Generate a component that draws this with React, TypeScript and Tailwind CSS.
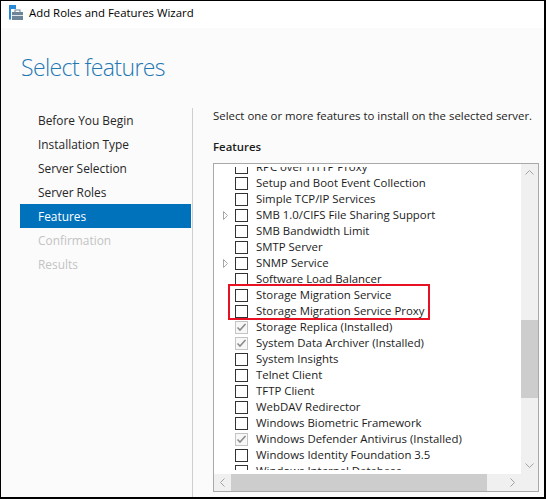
import React from 'react';

type Feature = {
    name: string;
    expandable?: boolean;
    installed?: boolean;
};

const features: Feature[] = [
    { name: 'RPC over HTTP Proxy' },
    { name: 'Setup and Boot Event Collection' },
    { name: 'Simple TCP/IP Services' },
    { name: 'SMB 1.0/CIFS File Sharing Support', expandable: true },
    { name: 'SMB Bandwidth Limit' },
    { name: 'SMTP Server' },
    { name: 'SNMP Service', expandable: true },
    { name: 'Software Load Balancer' },
    { name: 'Storage Migration Service' },
    { name: 'Storage Migration Service Proxy' },
    { name: 'Storage Replica (Installed)', installed: true },
    { name: 'System Data Archiver (Installed)', installed: true },
    { name: 'System Insights' },
    { name: 'Telnet Client' },
    { name: 'TFTP Client' },
    { name: 'WebDAV Redirector' },
    { name: 'Windows Biometric Framework' },
    { name: 'Windows Defender Antivirus (Installed)', installed: true },
    { name: 'Windows Identity Foundation 3.5' },
    { name: 'Windows Internal Database' },
];

const steps = [
    { label: 'Before You Begin', state: 'done' },
    { label: 'Installation Type', state: 'done' },
    { label: 'Server Selection', state: 'done' },
    { label: 'Server Roles', state: 'done' },
    { label: 'Features', state: 'active' },
    { label: 'Confirmation', state: 'disabled' },
    { label: 'Results', state: 'disabled' },
];

const font = "font-['Open_Sans',sans-serif]";

function WizardIcon() {
    return (
        <svg width="16" height="16" viewBox="0 0 16 16">
            <rect x="0" y="0" width="7" height="4" fill="#2b8ad6" />
            <rect x="0" y="0" width="2" height="14.5" fill="#2b8ad6" />
            <rect x="6" y="5" width="5" height="3" fill="none" stroke="#6e8598" strokeWidth="1" />
            <rect x="3" y="7" width="11" height="8" fill="#6e8598" />
            <rect x="3" y="10" width="11" height="1" fill="#dfe6ec" />
        </svg>
    );
}

function Chevron({ dir }: { dir: 'up' | 'down' | 'left' | 'right' }) {
    const paths = {
        up: 'M0.5 4.5 L4.5 0.5 L8.5 4.5',
        down: 'M0.5 0.5 L4.5 4.5 L8.5 0.5',
        left: 'M4.5 0.5 L0.5 4.5 L4.5 8.5',
        right: 'M0.5 0.5 L4.5 4.5 L0.5 8.5',
    };
    const vertical = dir === 'up' || dir === 'down';
    return (
        <svg width={vertical ? 9 : 5} height={vertical ? 5 : 9} viewBox={vertical ? '0 0 9 5' : '0 0 5 9'}>
            <path d={paths[dir]} fill="none" stroke="#a3a3a3" strokeWidth="1" />
        </svg>
    );
}

function Checkbox({ checked }: { checked?: boolean }) {
    if (checked) {
        return (
            <div className="w-[13px] h-[13px] border border-[#c4c4c4] bg-[#f7f7f7] flex items-center justify-center">
                <svg width="11" height="11" viewBox="0 0 11 11">
                    <path d="M1.5 5.5 L4 8 L9.5 2" fill="none" stroke="#8c8c8c" strokeWidth="1.6" />
                </svg>
            </div>
        );
    }
    return <div className="w-[13px] h-[13px] border border-[#333333] bg-white" />;
}

function FeatureRow({ feature }: { feature: Feature }) {
    return (
        <div className="h-[16px] flex items-center pl-[9px] whitespace-nowrap">
            <div className="w-[12px] flex items-center">
                {feature.expandable && (
                    <svg width="6" height="9" viewBox="0 0 6 9">
                        <path d="M0.5 0.5 L4.5 4.5 L0.5 8.5 Z" fill="none" stroke="#a6a6a6" strokeWidth="1" />
                    </svg>
                )}
            </div>
            <Checkbox checked={feature.installed} />
            <span className="ml-[8px] text-[11.4px] leading-[16px] text-[#1b1b1b]">{feature.name}</span>
        </div>
    );
}

export default function App() {
    return (
        <div className={`${font} w-[546px] h-[499px] border-l border-t border-r-2 border-b-2 border-black bg-[#fbfbfb] flex flex-col overflow-hidden`}>
            {/* title bar */}
            <div className="h-[27px] bg-white flex items-start pt-[4px] pl-[8px] shrink-0">
                <WizardIcon />
                <span className="ml-[4px] text-[11.4px] leading-[16px] text-black">Add Roles and Features Wizard</span>
            </div>

            <div className="flex-1 flex flex-col">
                <h1 className="mt-[27px] pl-[20px] text-[23px] leading-[24px] font-light tracking-[-0.6px] text-[#1f78b4]">
                    Select features
                </h1>

                <div className="mt-[29px] flex flex-1">
                    <nav className="ml-[19px] w-[171px] flex flex-col">
                        {steps.map((step) => (
                            <div
                                key={step.label}
                                className={
                                    step.state === 'active'
                                        ? 'h-[24px] leading-[24px] pl-[18px] text-[11.9px] bg-[#0072bc] text-white'
                                        : step.state === 'disabled'
                                        ? 'h-[24px] leading-[24px] pl-[18px] text-[11.9px] text-[#c3c3c3]'
                                        : 'h-[24px] leading-[24px] pl-[18px] text-[11.9px] text-[#262626]'
                                }
                            >
                                {step.label}
                            </div>
                        ))}
                    </nav>

                    <div className="ml-[1px] w-px bg-[#cfcfcf]" />

                    <div className="pl-[20px] flex flex-col">
                        <p className="h-[16px] leading-[16px] text-[11.4px] text-[#1b1b1b] whitespace-nowrap">
                            Select one or more features to install on the selected server.
                        </p>
                        <p className="mt-[15px] h-[16px] leading-[16px] text-[11.4px] font-semibold text-[#1b1b1b]">Features</p>

                        {/* features list */}
                        <div className="relative mt-[8px] w-[326px] h-[329px] border border-[#a9a9a9] bg-white flex flex-col">
                            <div className="flex h-[310px]">
                                <div className="w-[307px] pt-[3px]">
                                    <div className="h-[303px] overflow-hidden">
                                        <div className="-mt-[8px]">
                                            {features.map((f) => (
                                                <FeatureRow key={f.name} feature={f} />
                                            ))}
                                        </div>
                                    </div>
                                </div>
                                <div className="w-[17px] bg-[#f0f0f0] flex flex-col">
                                    <div className="h-[17px] flex items-center justify-center">
                                        <Chevron dir="up" />
                                    </div>
                                    <div className="flex-1">
                                        <div className="mt-[139px] h-[78px] bg-[#cdcdcd]" />
                                    </div>
                                    <div className="h-[17px] flex items-center justify-center">
                                        <Chevron dir="down" />
                                    </div>
                                </div>
                            </div>
                            <div className="flex h-[17px] bg-[#f0f0f0]">
                                <div className="w-[17px] flex items-center justify-center">
                                    <Chevron dir="left" />
                                </div>
                                <div className="w-[273px]">
                                    <div className="w-[256px] h-full bg-[#cdcdcd]" />
                                </div>
                                <div className="w-[17px] flex items-center justify-center">
                                    <Chevron dir="right" />
                                </div>
                                <div className="w-[17px]" />
                            </div>

                            {/* annotation */}
                            <div className="absolute left-[14px] top-[120px] w-[202px] h-[36px] border-2 border-[#e81123]" />
                        </div>
                    </div>
                </div>
            </div>
        </div>
    );
}
